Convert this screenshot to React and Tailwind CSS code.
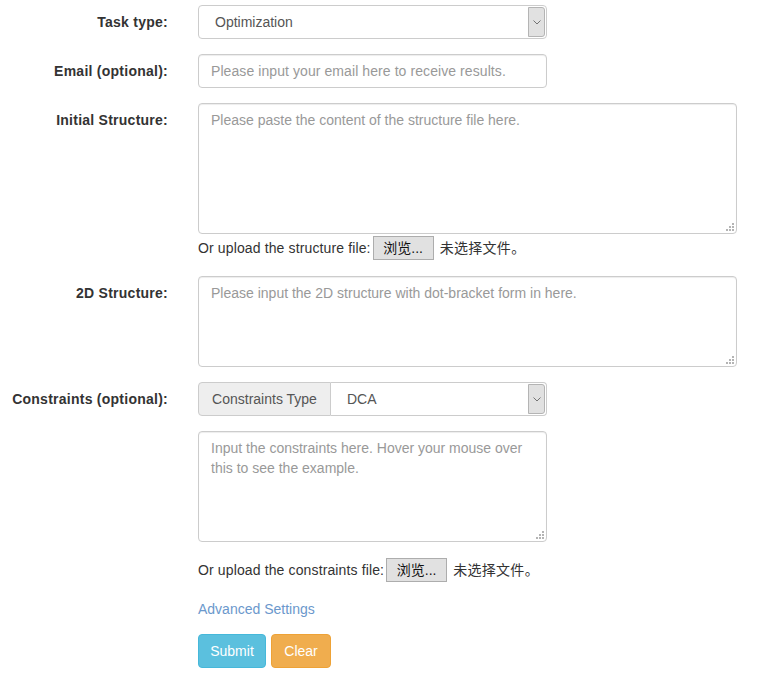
import React from 'react';

const font = { fontFamily: '"Liberation Sans", Arial, "Noto Sans CJK SC", sans-serif' };

function Grip() {
  return (
    <svg className="absolute right-[3px] bottom-[3px]" width="9" height="9" viewBox="0 0 9 9">
      <rect x="7" y="1" width="2" height="2" fill="#b4b4b4" />
      <rect x="4" y="4" width="2" height="2" fill="#b4b4b4" />
      <rect x="7" y="4" width="2" height="2" fill="#b4b4b4" />
      <rect x="1" y="7" width="2" height="2" fill="#b4b4b4" />
      <rect x="4" y="7" width="2" height="2" fill="#b4b4b4" />
      <rect x="7" y="7" width="2" height="2" fill="#b4b4b4" />
    </svg>
  );
}

function Area({ w, h, placeholder }) {
  return (
    <div className={`relative ${w} ${h}`}>
      <textarea
        placeholder={placeholder}
        className="w-full h-full resize-none rounded border border-[#ccc] bg-white px-3 py-[6px] text-sm leading-5 text-[#555] placeholder:text-[#999] shadow-[inset_0_1px_1px_rgba(0,0,0,0.075)] outline-none"
        style={font}
      />
      <Grip />
    </div>
  );
}

function ArrowBox() {
  return (
    <div className="absolute right-[1px] top-[1px] bottom-[1px] w-[17px] bg-[#e1e1e1] border border-[#b4b4b4] rounded-r-[3px] flex items-center justify-center">
      <svg width="8" height="5" viewBox="0 0 8 5">
        <path d="M0.5 0.5 L4 4 L7.5 0.5" fill="none" stroke="#666" strokeWidth="0.9" />
      </svg>
    </div>
  );
}

function Upload({ label }) {
  return (
    <div className="flex items-center h-[27px] text-sm text-[#333]">
      <span className="tracking-[0.13px]">{label}</span>
      <span className="ml-[2px] h-6 w-[61px] flex items-center justify-center bg-[#e1e1e1] border border-[#adadad] text-[#111]">浏览...</span>
      <span className="ml-[6px] tracking-[0.3px]">未选择文件。</span>
    </div>
  );
}

function Label({ children }) {
  return <div className="pt-[7px] text-right text-sm font-bold leading-5 tracking-[0.25px] text-[#333]">{children}</div>;
}

export default function App() {
  return (
    <div className="bg-white w-[760px] h-[678px] pt-[5px]" style={font}>
      <div className="grid grid-cols-[168px_1fr] gap-x-[30px] gap-y-[15px] items-start text-sm leading-5">
        <Label>Task type:</Label>
        <div className="relative w-[349px] h-[34px] rounded border border-[#ccc] bg-white flex items-center pl-4 text-[#555]">
          Optimization
          <ArrowBox />
        </div>

        <Label>Email (optional):</Label>
        <input
          placeholder="Please input your email here to receive results."
          className="w-[349px] h-[34px] rounded border border-[#ccc] bg-white px-3 text-sm tracking-[0.08px] text-[#555] placeholder:text-[#999] shadow-[inset_0_1px_1px_rgba(0,0,0,0.075)] outline-none"
          style={font}
        />

        <Label>Initial Structure:</Label>
        <div>
          <Area w="w-[539px]" h="h-[131px]" placeholder="Please paste the content of the structure file here." />
          <Upload label="Or upload the structure file:" />
        </div>

        <Label>2D Structure:</Label>
        <Area w="w-[539px]" h="h-[91px]" placeholder="Please input the 2D structure with dot-bracket form in here." />

        <Label>Constraints (optional):</Label>
        <div>
          <div className="flex w-[349px] h-[34px]">
            <div className="w-[133px] flex items-center justify-center bg-[#eee] border border-[#ccc] rounded-l text-[#555]">Constraints Type</div>
            <div className="relative flex-1 flex items-center pl-4 border border-l-0 border-[#ccc] rounded-r bg-white text-[#555]">
              DCA
              <ArrowBox />
            </div>
          </div>
          <div className="mt-[15px]">
            <Area w="w-[349px]" h="h-[111px]" placeholder="Input the constraints here. Hover your mouse over this to see the example." />
          </div>
          <div className="mt-[14px]">
            <Upload label="Or upload the constraints file:" />
          </div>
          <div className="mt-[16px] text-[#6b98cc]">Advanced Settings</div>
          <div className="mt-[15px] flex gap-[5px]">
            <button className="h-[34px] w-[68px] rounded border border-[#46b8da] bg-[#5bc0de] text-white text-sm">Submit</button>
            <button className="h-[34px] w-[60px] rounded border border-[#eea236] bg-[#f0ad4e] text-white text-sm">Clear</button>
          </div>
        </div>
      </div>
    </div>
  );
}
